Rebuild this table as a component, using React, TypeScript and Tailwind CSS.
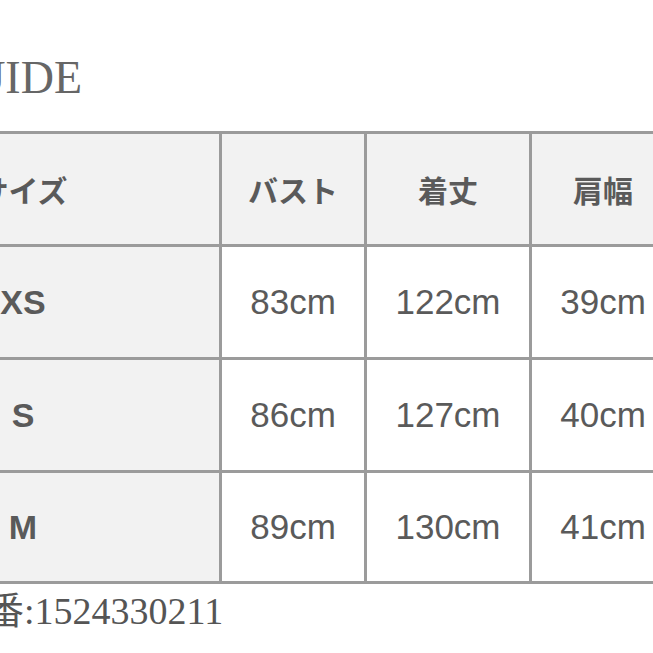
import React from 'react';

const headers = ['サイズ', 'バスト', '着丈', '肩幅'];

const rows = [
  { size: 'XS', bust: '83cm', length: '122cm', shoulder: '39cm', h: 'h-[110px]' },
  { size: 'S', bust: '86cm', length: '127cm', shoulder: '40cm', h: 'h-[110px]' },
  { size: 'M', bust: '89cm', length: '130cm', shoulder: '41cm', h: 'h-[108px]' },
];

const serif = { fontFamily: '"Liberation Serif", "Noto Sans CJK JP", serif' };

export default function App() {
  return (
    <div className="w-[653px] h-[653px] bg-white overflow-hidden">
      {/* title, clipped on the left */}
      <div className="pt-[55px] flex w-[82px] justify-end">
        <span
          className="shrink-0 whitespace-nowrap text-[46px] leading-[46px] text-[#666666]"
          style={serif}
        >
          SIZE GUIDE
        </span>
      </div>

      <div
        className="mt-[30px] ml-[-176px] w-max grid grid-cols-[392px_142px_162px_142px] gap-[3px] border-[3px] border-[#9b9b9b] bg-[#9b9b9b]"
        style={{ fontFamily: '"Liberation Sans", "Noto Sans CJK JP", sans-serif' }}
      >
        {headers.map((h) => (
          <div
            key={h}
            className="h-[110px] bg-[#f2f2f2] flex items-center justify-center text-[30px] font-bold text-[#5a5a5a]"
            style={{ fontFamily: '"Noto Sans CJK JP", sans-serif' }}
          >
            {h}
          </div>
        ))}
        {rows.map((r) => (
          <React.Fragment key={r.size}>
            <div className={`${r.h} bg-[#f2f2f2] flex items-center justify-center text-[34px] font-bold text-[#5a5a5a]`}>
              {r.size}
            </div>
            <div className={`${r.h} bg-white flex items-center justify-center text-[35px] text-[#5a5a5a]`}>
              {r.bust}
            </div>
            <div className={`${r.h} bg-white flex items-center justify-center text-[35px] text-[#5a5a5a]`}>
              {r.length}
            </div>
            <div className={`${r.h} bg-white flex items-center justify-center text-[35px] text-[#5a5a5a]`}>
              {r.shoulder}
            </div>
          </React.Fragment>
        ))}
      </div>

      <div
        className="mt-[8px] ml-[-52px] whitespace-nowrap text-[38px] leading-[38px] text-[#555555]"
        style={serif}
      >
        品番:1524330211
      </div>
    </div>
  );
}
